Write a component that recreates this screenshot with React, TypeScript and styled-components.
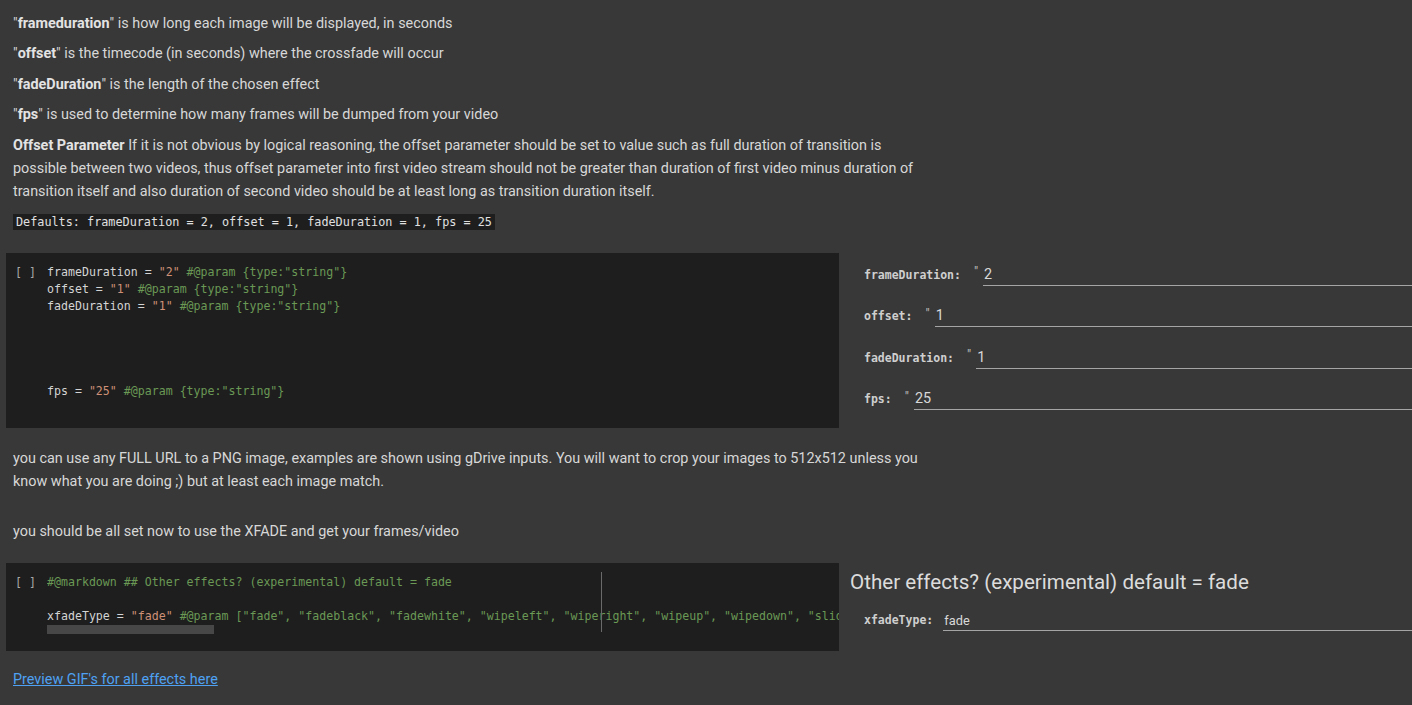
import React from "react";
import styled, { createGlobalStyle } from "styled-components";

type Kind = "plain" | "str" | "cmt";
type Token = [Kind, string];

const paramsCode: Token[][] = [
  [["plain", "frameDuration = "], ["str", '"2"'], ["cmt", ' #@param {type:"string"}']],
  [["plain", "offset = "], ["str", '"1"'], ["cmt", ' #@param {type:"string"}']],
  [["plain", "fadeDuration = "], ["str", '"1"'], ["cmt", ' #@param {type:"string"}']],
  [],
  [],
  [],
  [],
  [["plain", "fps = "], ["str", '"25"'], ["cmt", ' #@param {type:"string"}']],
];

const effectsCode: Token[][] = [
  [["cmt", "#@markdown ## Other effects? (experimental) default = fade"]],
  [],
  [
    ["plain", "xfadeType = "],
    ["str", '"fade"'],
    [
      "cmt",
      ' #@param ["fade", "fadeblack", "fadewhite", "wipeleft", "wiperight", "wipeup", "wipedown", "slideleft", "slideright", "slideup", "slidedown"]',
    ],
  ],
];

const fields = [
  { label: "frameDuration:", value: "2" },
  { label: "offset:", value: "1" },
  { label: "fadeDuration:", value: "1" },
  { label: "fps:", value: "25" },
];

const CodeLines: React.FC<{ lines: Token[][] }> = ({ lines }) => (
  <>
    {lines.map((line, i) => (
      <Line key={i}>
        {line.length === 0
          ? " "
          : line.map(([kind, text], j) => (
              <Tok key={j} $kind={kind}>
                {text}
              </Tok>
            ))}
      </Line>
    ))}
  </>
);

const App: React.FC = () => {
  return (
    <Page>
      <GlobalStyle />
      <TextCell $pad="11.5px 13px 19px">
        <Para>
          "<b>frameduration</b>" is how long each image will be displayed, in seconds
        </Para>
        <Para>
          "<b>offset</b>" is the timecode (in seconds) where the crossfade will occur
        </Para>
        <Para>
          "<b>fadeDuration</b>" is the length of the chosen effect
        </Para>
        <Para>
          "<b>fps</b>" is used to determine how many frames will be dumped from your video
        </Para>
        <Para>
          <b>Offset Parameter</b> If it is not obvious by logical reasoning, the offset
          parameter should be set to value such as full duration of transition is possible
          between two videos, thus offset parameter into first video stream should not be
          greater than duration of first video minus duration of transition itself and also
          duration of second video should be at least long as transition duration itself.
        </Para>
        <Para>
          <InlineCode>Defaults: frameDuration = 2, offset = 1, fadeDuration = 1, fps = 25</InlineCode>
        </Para>
      </TextCell>

      <CellRow>
        <CodeCell>
          <Gutter>[ ]</Gutter>
          <CodeBody $bottom={28.5}>
            <CodeLines lines={paramsCode} />
          </CodeBody>
        </CodeCell>
        <FormPanel>
          {fields.map((f) => (
            <Field key={f.label}>
              <FieldLabel>{f.label}</FieldLabel>
              <Quote>"</Quote>
              <Input>{f.value}</Input>
            </Field>
          ))}
        </FormPanel>
      </CellRow>

      <TextCell $pad="18.5px 13px 20.5px">
        <Para>
          you can use any FULL URL to a PNG image, examples are shown using gDrive inputs. You
          will want to crop your images to 512x512 unless you know what you are doing ;) but at
          least each image match.
        </Para>
        <Para $gapTop={27}>you should be all set now to use the XFADE and get your frames/video</Para>
      </TextCell>

      <CellRow>
        <CodeCell>
          <Gutter>[ ]</Gutter>
          <CodeBody $bottom={17}>
            <CodeLines lines={effectsCode} />
            <ScrollThumb />
          </CodeBody>
          <Caret />
        </CodeCell>
        <FormPanel>
          <FormHeading>Other effects? (experimental) default = fade</FormHeading>
          <Field $compact>
            <FieldLabel>xfadeType:</FieldLabel>
            <SelectValue>fade</SelectValue>
          </Field>
        </FormPanel>
      </CellRow>

      <TextCell $pad="17.5px 13px 14px">
        <Para>
          <Link href="#">Preview GIF's for all effects here</Link>
        </Para>
      </TextCell>
    </Page>
  );
};

const GlobalStyle = createGlobalStyle`
  html, body {
    margin: 0;
    padding: 0;
    background: #383838;
  }
  body {
    font-family: Roboto, "Liberation Sans", sans-serif;
    color: #d5d5d5;
    overflow: hidden;
  }
`;

const Page = styled.div`
  min-height: 705px;
  background: #383838;
`;

const TextCell = styled.div<{ $pad: string }>`
  padding: ${(p) => p.$pad};
  width: 912px;
  box-sizing: content-box;
`;

const Para = styled.p<{ $gapTop?: number }>`
  margin: ${(p) => p.$gapTop ?? 0}px 0 7.5px;
  font-size: 14.4px;
  line-height: 23px;
  color: #d7d7d7;

  b {
    font-weight: 700;
    color: #e3e3e3;
  }
  &:last-child {
    margin-bottom: 0;
  }
`;

const InlineCode = styled.code`
  font-family: "DejaVu Sans Mono", "Liberation Mono", monospace;
  font-size: 11.8px;
  background: #1e1e1e;
  color: #e0e0e0;
  padding: 1px 3px;
`;

const CellRow = styled.div`
  display: flex;
  align-items: stretch;
  padding-left: 6px;
  gap: 11px;
`;

const CodeCell = styled.div`
  position: relative;
  display: flex;
  width: 833px;
  flex: 0 0 833px;
  background: #1e1e1e;
  overflow: hidden;
  font-family: "DejaVu Sans Mono", "Liberation Mono", monospace;
  font-size: 11.6px;
`;

const Gutter = styled.div`
  flex: 0 0 41px;
  box-sizing: border-box;
  padding: 10.5px 0 0 9px;
  line-height: 17px;
  color: #a8a8a8;
  white-space: pre;
`;

const CodeBody = styled.div<{ $bottom: number }>`
  flex: 1;
  min-width: 0;
  padding: 10.5px 0 ${(p) => p.$bottom}px;
  overflow: hidden;
`;

const Line = styled.div`
  height: 17px;
  line-height: 17px;
  white-space: pre;
  color: #d4d4d4;
`;

const Tok = styled.span<{ $kind: Kind }>`
  color: ${(p) =>
    p.$kind === "str" ? "#ce9178" : p.$kind === "cmt" ? "#6a9955" : "#d4d4d4"};
`;

const ScrollThumb = styled.div`
  width: 167px;
  height: 9px;
  background: #474747;
`;

const Caret = styled.div`
  position: absolute;
  left: 595px;
  top: 9px;
  width: 1px;
  height: 60px;
  background: #6a6a6a;
`;

const FormPanel = styled.div`
  flex: 1;
  min-width: 0;
  display: flex;
  flex-direction: column;
  padding-top: 1px;
`;

const Field = styled.div<{ $compact?: boolean }>`
  display: flex;
  align-items: center;
  height: ${(p) => (p.$compact ? "32px" : "41.5px")};
  margin-top: ${(p) => (p.$compact ? "6px" : "0")};
  padding-left: 14px;
`;

const FieldLabel = styled.span`
  font-family: "DejaVu Sans Mono", "Liberation Mono", monospace;
  font-size: 11.5px;
  font-weight: 700;
  color: #cfcfcf;
  margin-right: 10px;
  white-space: pre;
`;

const Quote = styled.span`
  align-self: center;
  font-size: 13px;
  line-height: 13px;
  color: #bdbdbd;
  margin-top: -6px;
  margin-left: 3px;
  margin-right: 5px;
`;

const Input = styled.div`
  flex: 1;
  height: 20px;
  margin-top: 1px;
  border-bottom: 1px solid #a5a5a5;
  padding-left: 1px;
  font-size: 14.4px;
  line-height: 19px;
  color: #d8d8d8;
`;

const SelectValue = styled.div`
  flex: 1;
  height: 18px;
  margin-top: 2px;
  border-bottom: 1px solid #a5a5a5;
  padding-left: 1px;
  font-size: 12.8px;
  line-height: 17px;
  color: #d8d8d8;
`;

const FormHeading = styled.div`
  font-size: 20.6px;
  line-height: 28px;
  color: #dcdcdc;
  margin-top: 4px;
  height: 30px;
`;

const Link = styled.a`
  color: #4ea1f3;
  text-decoration: underline;
`;

export default App;
